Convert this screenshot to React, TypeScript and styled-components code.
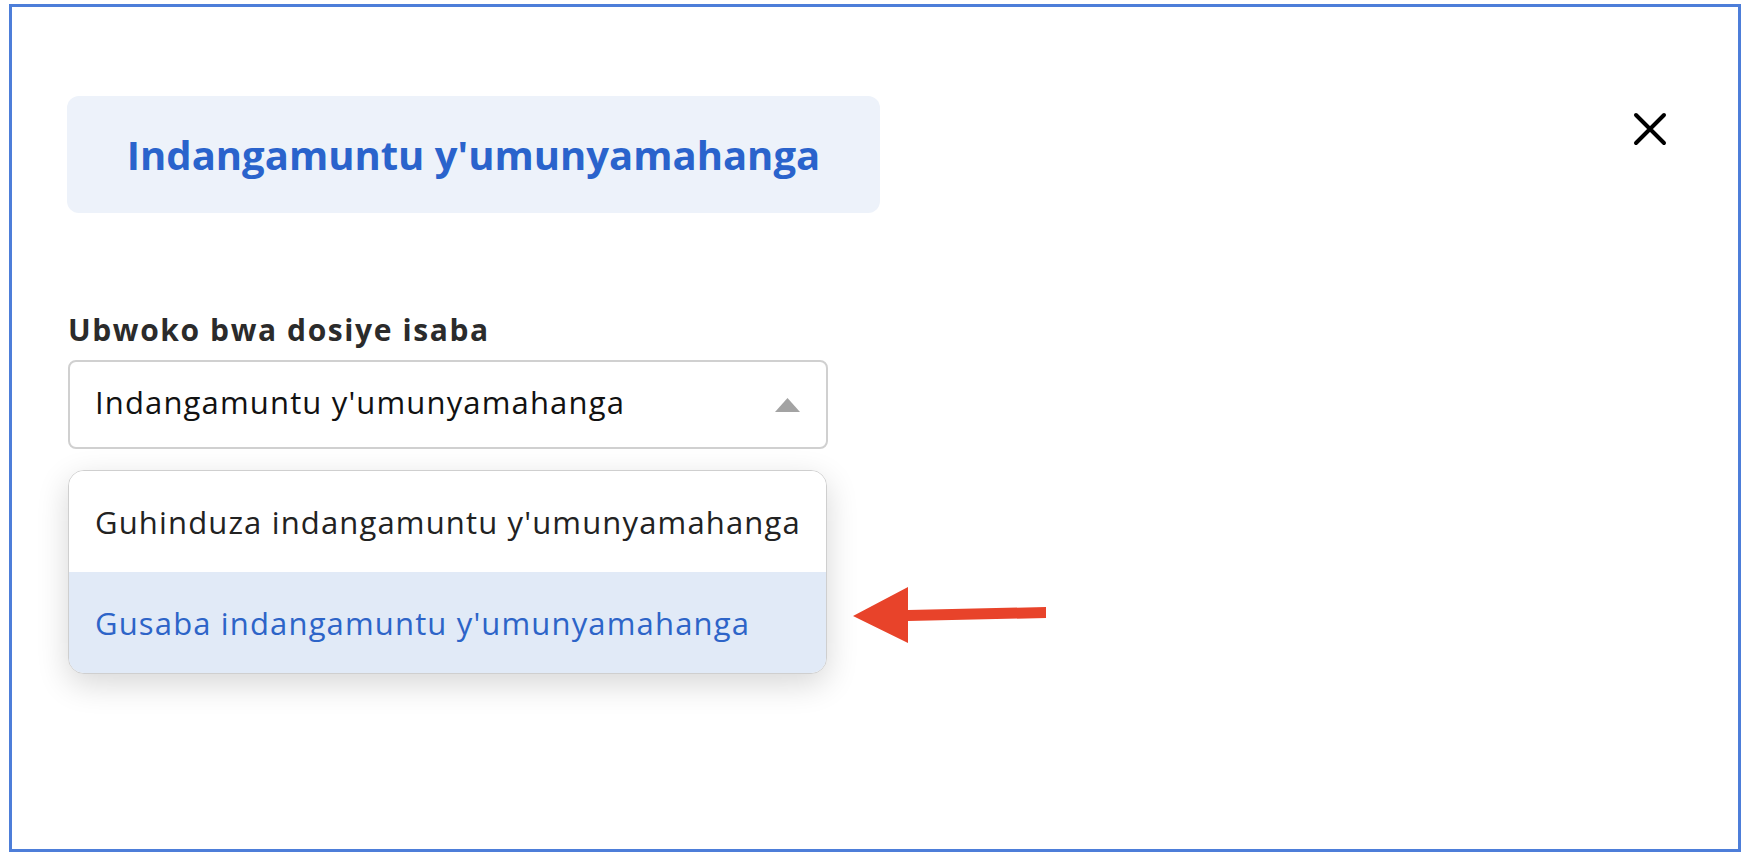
import React from 'react'
import styled, { createGlobalStyle } from 'styled-components'

const GlobalStyle = createGlobalStyle`
  html, body {
    margin: 0;
    padding: 0;
    background: #ffffff;
  }
  body {
    font-family: "Open Sans", "Noto Sans", sans-serif;
    color: #222;
  }
  * { box-sizing: border-box; }
`

const Page = styled.div`
  padding: 4px 7px 12px 9px;
`

const Frame = styled.div`
  height: 848px;
  border: 3px solid #4d7ed9;
  padding: 89px 71px 0 55px;
`

const Header = styled.div`
  display: flex;
  justify-content: space-between;
  align-items: flex-start;
`

const TitleBox = styled.div`
  width: 813px;
  height: 117px;
  border-radius: 12px;
  background: #edf2fa;
  display: flex;
  align-items: center;
  justify-content: center;
  font-size: 40px;
  font-weight: 700;
  color: #2a63cc;
`

const CloseButton = styled.button`
  margin-top: 16px;
  padding: 0;
  border: 0;
  background: none;
  width: 34px;
  height: 34px;
  cursor: pointer;
  display: block;
`

const Form = styled.div`
  margin-top: 96px;
  margin-left: 1px;
  width: 760px;
`

const Label = styled.div`
  font-size: 30px;
  font-weight: 700;
  letter-spacing: 1.6px;
  color: #2b2b2b;
  margin-bottom: 10px;
`

const Select = styled.div`
  height: 89px;
  border: 2px solid #d0d0d0;
  border-radius: 8px;
  display: flex;
  align-items: center;
  justify-content: space-between;
  padding: 0 26px 6px 25px;
  font-size: 31px;
  letter-spacing: 1.15px;
  color: #111;
`

const Caret = styled.svg`
  width: 25px;
  height: 14px;
  margin-top: 6px;
  flex: none;
`

const MenuWrap = styled.div`
  position: relative;
  margin-top: 21px;
`

const Menu = styled.ul`
  list-style: none;
  margin: 0;
  padding: 0;
  width: 759px;
  border: 1.5px solid #cfcfcf;
  border-radius: 16px;
  overflow: hidden;
  background: #fff;
  box-shadow: 0 10px 32px rgba(0, 0, 0, 0.16);
`

const Option = styled.li<{ $active?: boolean }>`
  height: 101px;
  display: flex;
  align-items: center;
  padding-left: 26px;
  font-size: 31px;
  letter-spacing: 1.15px;
  color: ${p => (p.$active ? '#2d64c8' : '#222')};
  background: ${p => (p.$active ? '#e1eaf7' : '#fff')};
`

const Pointer = styled.svg`
  position: absolute;
  left: 785px;
  top: 117px;
  width: 195px;
  height: 58px;
`

export default function App () {
  return (
    <Page>
      <GlobalStyle />
      <Frame>
        <Header>
          <TitleBox>Indangamuntu y'umunyamahanga</TitleBox>
          <CloseButton aria-label='close'>
            <svg width='34' height='34' viewBox='0 0 34 34'>
              <path
                d='M3 3 L31 31 M31 3 L3 31'
                stroke='#000'
                strokeWidth='4'
                strokeLinecap='round'
              />
            </svg>
          </CloseButton>
        </Header>

        <Form>
          <Label>Ubwoko bwa dosiye isaba</Label>
          <Select>
            <span>Indangamuntu y'umunyamahanga</span>
            <Caret viewBox='0 0 25 14'>
              <polygon points='12.5,0 25,14 0,14' fill='#a3a3a3' />
            </Caret>
          </Select>
          <MenuWrap>
            <Menu>
              <Option>Guhinduza indangamuntu y'umunyamahanga</Option>
              <Option $active>Gusaba indangamuntu y'umunyamahanga</Option>
            </Menu>
            <Pointer viewBox='0 0 195 58'>
              <polygon
                points='0,29 55,0 55,23 193,20 193,31 55,34 55,56'
                fill='#e8432a'
              />
            </Pointer>
          </MenuWrap>
        </Form>
      </Frame>
    </Page>
  )
}
